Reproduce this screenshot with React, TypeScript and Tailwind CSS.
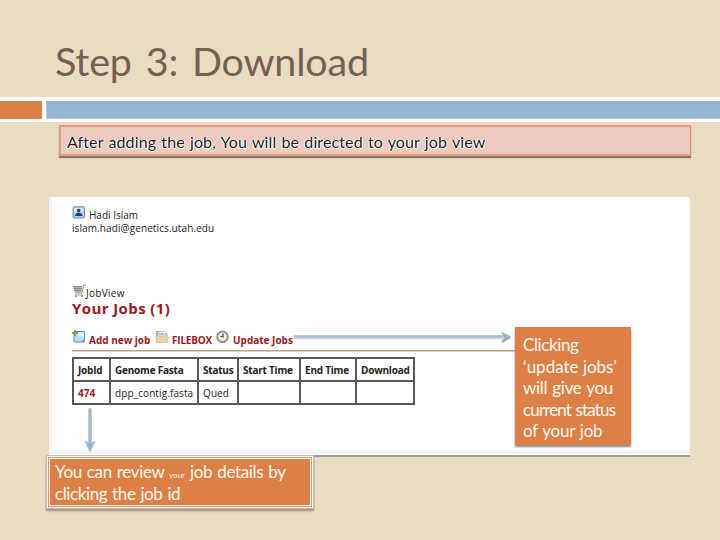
import React from "react";

const futura = "font-[Lato,'Open_Sans',sans-serif]";
const humanist = "font-['Open_Sans','Noto_Sans',sans-serif]";

function UserIcon() {
  return (
    <svg width="14" height="13" viewBox="0 0 14 13" className="block shrink-0">
      <rect x="1" y="0.8" width="11.5" height="11.2" rx="1" fill="#a9cdea" stroke="#7593ac" />
      <path d="M2 2h9v4H2z" fill="#d5e9f7" />
      <circle cx="6.7" cy="4.5" r="1.8" fill="#253c58" />
      <path d="M3 10c.2-2.500 2-3.200 3.700-3.200S10.300 7.500 10.500 10z" fill="#253c58" />
    </svg>
  );
}

function CartIcon() {
  return (
    <svg width="14" height="14" viewBox="0 0 14 14" className="block shrink-0">
      <path d="M1 2.500h9L9 8.500H3z" fill="#b9b5ad" />
      <path d="M1 2.500h9M1.500 4.500h8.500M2 6.500h7.500M13.500 1h-2L10 9H3" fill="none" stroke="#8f8b84" />
      <path d="M3 11h8" stroke="#aaa59d" />
      <circle cx="4" cy="12.300" r="1" fill="#8f8b84" />
      <circle cx="10" cy="12.300" r="1" fill="#8f8b84" />
    </svg>
  );
}

function AddIcon() {
  return (
    <svg width="14" height="14" viewBox="0 0 14 14" className="block shrink-0">
      <path d="M2 1.500h10.500V12H2z" fill="#b8dbf5" stroke="#668fb5" />
      <path d="M6 2.500h6v4H6z" fill="#e2f2fd" />
      <path d="M9 12l3.500-3.500V12z" fill="#6d9ed1" />
      <path d="M3 0v6M0 3h6" stroke="#83a64e" strokeWidth="2" />
    </svg>
  );
}

function FolderIcon() {
  return (
    <svg width="14" height="14" viewBox="0 0 14 14" className="block shrink-0">
      <path d="M1 1h4l1 2h6v9H1z" fill="#c7aa72" />
      <path d="M3 1.500h6l2 2v4H3z" fill="#fafafa" stroke="#929ba3" strokeWidth=".6" />
      <path d="M4 4h5" stroke="#7daecc" strokeWidth="1.500" />
      <path d="M.8 6h8l1-1h3v7.500H1.500z" fill="#e7d4ac" stroke="#ceb587" strokeWidth=".6" />
    </svg>
  );
}

function ClockIcon() {
  return (
    <svg width="14" height="14" viewBox="0 0 14 14" className="block shrink-0">
      <circle cx="6.500" cy="6.800" r="5.300" fill="#f7f1df" stroke="#9b9180" strokeWidth="2" />
      <path d="M7 3.500v4M7 6.500H4.500" stroke="#423d36" strokeWidth="1.200" />
    </svg>
  );
}

const columns = [
  ["JobId", "474", "w-[37px]"],
  ["Genome Fasta", "dpp_contig.fasta", "w-[88px]"],
  ["Status", "Qued", "w-[40px]"],
  ["Start Time", "", "w-[62px]"],
  ["End Time", "", "w-[56px]"],
  ["Download", "", "w-[58px]"],
];

function JobsTable() {
  return (
    <table className="ml-[20px] mt-[5px] w-[343px] table-fixed border-collapse border-2 border-[#5a5757] text-[10px] leading-[14px]">
      <thead>
        <tr className="h-[23px]">
          {columns.map(([title, , width]) => (
            <th key={title} className={`${width} border-2 border-[#5a5757] p-0 pl-1 text-left font-bold whitespace-nowrap text-[#242121] tracking-[-0.22px]`}>
              {title}
            </th>
          ))}
        </tr>
      </thead>
      <tbody>
        <tr className="h-[23px]">
          {columns.map(([title, value], i) => (
            <td key={title} className={`border-2 border-[#5a5757] p-0 pl-1 whitespace-nowrap ${i === 0 ? "font-bold text-[#981b24]" : "font-medium text-[#242121] tracking-[0.1px]"}`}>
              {value}
            </td>
          ))}
        </tr>
      </tbody>
    </table>
  );
}

export default function App() {
  return (
    <main className={`relative h-[540px] w-[720px] overflow-hidden bg-[#eadcc2] ${futura}`}>
      <header className="h-[97px] pl-[55px] pt-[36px]">
        <h1 className="text-[39.500px] leading-[50px] tracking-[-0.2px] [word-spacing:4px] whitespace-nowrap text-[#785f53]">Step 3: Download</h1>
      </header>
      <div className="flex h-[25px] gap-1 bg-white pt-1 pb-[3px]">
        <div className="w-[42px] bg-[#dc8047]" />
        <div className="flex-1 border-l border-b border-[#b0c8dc] bg-[#94b5d1]" />
      </div>
      <div className="mt-[3px] ml-[59px] flex h-[31px] w-[632px] items-center border-2 border-r border-[#e2a17b] border-r-[#df8b59] bg-[#eecbc0] pl-[6px] shadow-[0_2px_1px_#837a69]">
        <p className="pt-[3px] text-[16px] leading-5 tracking-[0.11px] [word-spacing:1px] whitespace-nowrap text-[#1d1919] [text-shadow:1px_0_0_#fff,-1px_0_0_#fff,0_1px_0_#fff]">After adding the job, You will be directed to your job view</p>
      </div>

      <section className={`mt-[41px] ml-[49px] h-[260px] w-[641px] border-l-[3px] border-b-2 border-l-[#f3f3f3] border-b-[#9b9da4] bg-[#fefefe] ${humanist}`}>
        <div className="h-[87px] pt-[9px] pl-[20px] text-[10px] leading-[12px] font-medium text-[#242121]">
          <div className="flex h-[16px] items-start gap-[3px]">
            <UserIcon />
            <span className="pt-[4px] leading-[11px]">Hadi Islam</span>
          </div>
          <p className="tracking-[0.1px]">islam.hadi@genetics.utah.edu</p>
        </div>
        <div className="flex h-[15px] items-start pl-[20px] text-[10px] leading-[14px] font-medium text-[#242121]">
          <CartIcon />
          <span className="pt-[2px] tracking-[0.3px]">JobView</span>
        </div>
        <h2 className="h-[31px] pl-[20px] text-[15px] leading-[18px] font-bold tracking-[0.4px] text-[#981b24]">Your Jobs (1)</h2>
        <div className="ml-[20px] flex h-[20px] items-start text-[10px] leading-[14px] font-bold whitespace-nowrap text-[#981b24]">
          <div className="flex w-[83px] gap-[3px]"><AddIcon /><span className="pt-[3px]">Add new job</span></div>
          <div className="flex w-[61px] gap-[3px]"><FolderIcon /><span className="pt-[3px] tracking-[-0.2px]">FILEBOX</span></div>
          <div className="flex gap-[3px]"><ClockIcon /><span className="pt-[3px]">Update Jobs</span></div>
        </div>
        <div className="ml-[20px] h-[2px] w-[445px] border-t border-b border-t-[#aaa6a6] border-b-[#e5cda7]" />
        <JobsTable />
        <div className="mt-[45px] h-[4px] bg-[#f3f3f3]" />
      </section>

      <svg className="absolute top-[327px] left-[292px]" width="222" height="20" viewBox="0 0 222 20">
        <path d="M2 11.500h208" stroke="#d9cfbc" strokeWidth="1.500" />
        <path d="M210 6l9 5-9 5 2-5z" fill="#aaa590" />
        <path d="M2 9.500h209" stroke="#9bbdd8" strokeWidth="2.500" />
        <path d="M209 4.500l10 5-10 6 3-6z" fill="#94b5d1" />
      </svg>
      <svg className="absolute top-[407px] left-[80px]" width="20" height="47" viewBox="0 0 20 47">
        <path d="M10 2v38" stroke="#d6cbb6" strokeWidth="4" />
        <path d="M10 1v39" stroke="#9bbdd8" strokeWidth="2.500" />
        <path d="M5 34l5 11 5-11-5 3z" fill="#94b5d1" stroke="#a8b9bf" strokeWidth=".7" />
      </svg>

      <aside className="absolute top-[327px] left-[515px] h-[118px] w-[116px] bg-[#dc8047] pt-[7px] pl-[8px] text-[17px] leading-[21.500px] whitespace-nowrap text-[#fff9ef] shadow-[0_2px_2px_#8c8579]">
        <p className="tracking-[-0.4px]">Clicking</p>
        <p>‘update jobs’</p>
        <p className="tracking-[-0.3px] [word-spacing:1px]">will give you</p>
        <p className="tracking-[-0.85px] [word-spacing:1px]">current status</p>
        <p className="tracking-[-0.25px] [word-spacing:1px]">of your job</p>
      </aside>
      <aside className="absolute top-[455px] left-[46px] h-[54px] w-[268px] border border-[#cebca9] bg-[#fff8ee] p-px shadow-[0_2px_2px_#999080]">
        <div className="h-full border border-[#df9b73] bg-[#fff8ee] p-px">
          <div className="h-full bg-[#dc8047] pt-[2px] pl-[5px] text-[17px] leading-[22px] whitespace-nowrap text-[#fff9ef]">
            <p className="h-[22px] tracking-[-0.35px] [word-spacing:1px]"><span>You can review </span><span className="text-[8px] leading-none tracking-normal">your</span><span> job details by</span></p>
            <p className="tracking-[-0.4px] [word-spacing:1px]">clicking the job id</p>
          </div>
        </div>
      </aside>
    </main>
  );
}
